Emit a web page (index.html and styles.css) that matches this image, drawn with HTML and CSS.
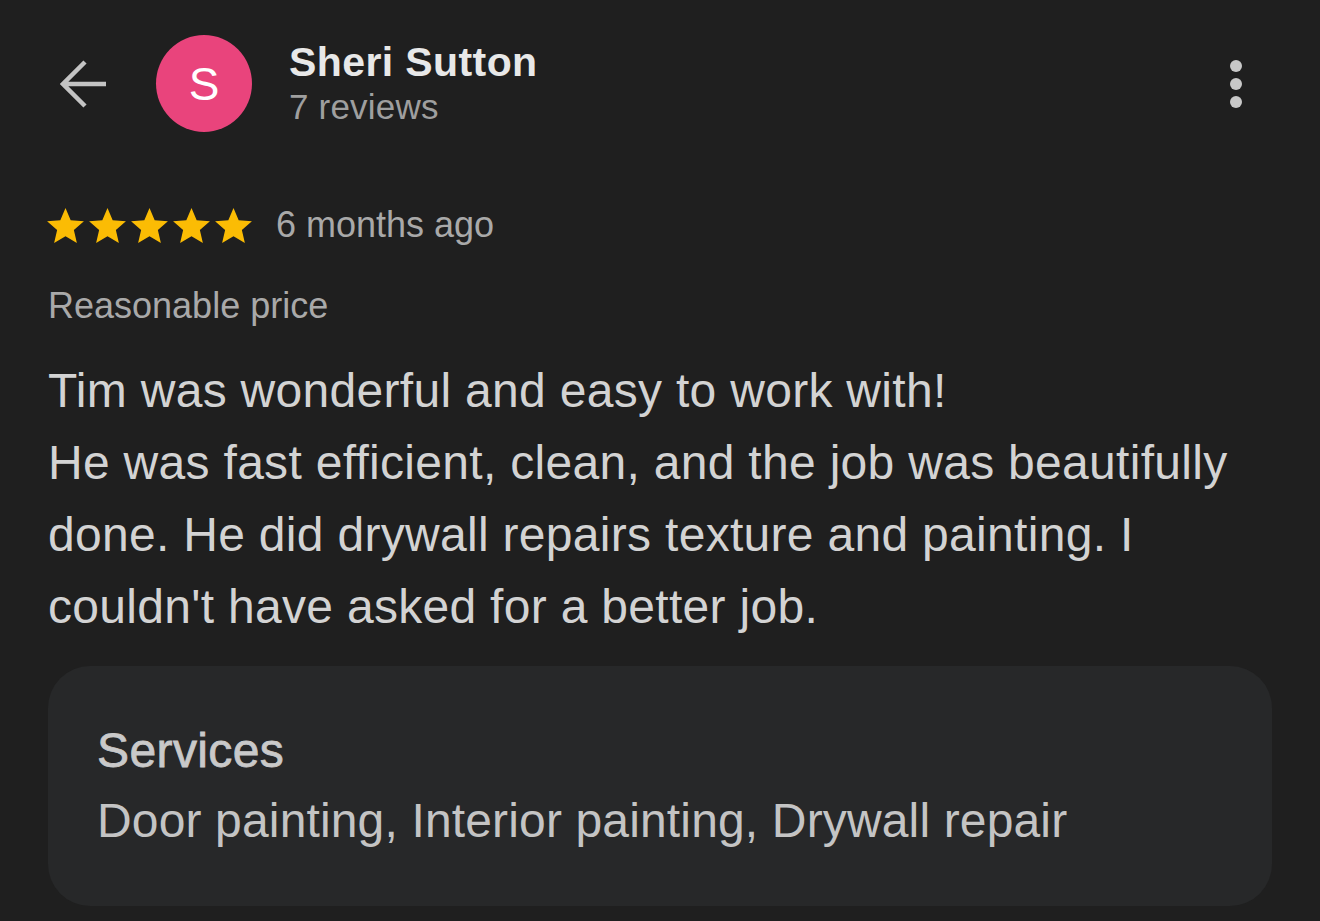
FILE: index.html
```html
<!DOCTYPE html>
<html lang="en">
<head>
<meta charset="utf-8">
<title>Review - Sheri Sutton</title>
<link rel="stylesheet" href="styles.css">
</head>
<body>
<div class="page">
  <header class="header">
    <button class="back" aria-label="Back">
      <svg width="48" height="48" viewBox="0 0 48 48"><path d="M46 24H3M25 2L3 24l22 22" fill="none" stroke="#c4c4c4" stroke-width="4.5" stroke-linecap="butt" stroke-linejoin="miter"/></svg>
    </button>
    <div class="avatar">S</div>
    <div class="who">
      <div class="name">Sheri Sutton</div>
      <div class="count">7 reviews</div>
    </div>
    <button class="more" aria-label="More">
      <svg width="12" height="48" viewBox="0 0 12 48"><circle cx="6" cy="6" r="6" fill="#c8c8c8"/><circle cx="6" cy="24" r="6" fill="#c8c8c8"/><circle cx="6" cy="42" r="6" fill="#c8c8c8"/></svg>
    </button>
  </header>

  <section class="review">
    <div class="rating">
      <div class="stars">
        <svg class="star" viewBox="2 2 20 19"><path d="M12 17.27L18.18 21l-1.64-7.03L22 9.24l-7.19-.61L12 2 9.19 8.63 2 9.24l5.46 4.73L5.82 21z"/></svg>
        <svg class="star" viewBox="2 2 20 19"><path d="M12 17.27L18.18 21l-1.64-7.03L22 9.24l-7.19-.61L12 2 9.19 8.63 2 9.24l5.46 4.73L5.82 21z"/></svg>
        <svg class="star" viewBox="2 2 20 19"><path d="M12 17.27L18.18 21l-1.64-7.03L22 9.24l-7.19-.61L12 2 9.19 8.63 2 9.24l5.46 4.73L5.82 21z"/></svg>
        <svg class="star" viewBox="2 2 20 19"><path d="M12 17.27L18.18 21l-1.64-7.03L22 9.24l-7.19-.61L12 2 9.19 8.63 2 9.24l5.46 4.73L5.82 21z"/></svg>
        <svg class="star" viewBox="2 2 20 19"><path d="M12 17.27L18.18 21l-1.64-7.03L22 9.24l-7.19-.61L12 2 9.19 8.63 2 9.24l5.46 4.73L5.82 21z"/></svg>
      </div>
      <span class="when">6 months ago</span>
    </div>
    <div class="tag">Reasonable price</div>
    <p class="text">Tim was wonderful and easy to work with!<br>He was fast efficient, clean, and the job was beautifully done. He did drywall repairs texture and painting. I couldn't have asked for a better job.</p>

    <div class="card">
      <div class="card-title">Services</div>
      <div class="card-body">Door painting, Interior painting, Drywall repair</div>
    </div>
  </section>
</div>
</body>
</html>
```

FILE: styles.css
```css
html, body {
  margin: 0;
  padding: 0;
  background: #1f1f1f;
}

body {
  font-family: "Liberation Sans", Arial, Helvetica, sans-serif;
  color: #d4d4d4;
  width: 1320px;
  height: 921px;
  overflow: hidden;
}

.page {
  display: flex;
  flex-direction: column;
}

.header {
  display: flex;
  align-items: center;
  height: 97px;
  padding: 35px 78px 0 60px;
}

.back, .more {
  background: none;
  border: 0;
  padding: 0;
  margin: 0;
  display: flex;
}

.avatar {
  width: 96px;
  height: 97px;
  border-radius: 50%;
  background: #e9447c;
  color: #ffffff;
  margin-left: 48px;
  display: flex;
  align-items: center;
  justify-content: center;
  font-size: 46px;
  line-height: 1;
  padding-top: 1px;
  box-sizing: border-box;
}

.who {
  margin-left: 37px;
  display: flex;
  flex-direction: column;
}

.name {
  font-size: 41px;
  font-weight: bold;
  line-height: 47px;
  letter-spacing: 0.4px;
  color: #e8e8e8;
}

.count {
  font-size: 35px;
  line-height: 42px;
  letter-spacing: 0.2px;
  color: #9f9f9f;
}

.more {
  margin-left: auto;
}

.review {
  padding: 72px 48px 0 48px;
  display: flex;
  flex-direction: column;
}

.rating {
  display: flex;
  align-items: center;
  height: 42px;
}

.stars {
  display: flex;
  gap: 5px;
  margin-left: -1px;
}

.star {
  width: 37px;
  height: 35px;
  fill: #fbbc04;
}

.when {
  margin-left: 24px;
  font-size: 36px;
  line-height: 42px;
  color: #a9a9a9;
}

.tag {
  margin-top: 39px;
  font-size: 36px;
  line-height: 42px;
  color: #a9a9a9;
}

.text {
  margin: 28px 0 0 0;
  font-size: 48px;
  line-height: 72px;
  letter-spacing: 0.3px;
  color: #d3d3d3;
}

.card {
  margin-top: 23px;
  width: 1224px;
  box-sizing: border-box;
  background: #272829;
  border-radius: 42px;
  padding: 50px 49px;
}

.card-title {
  font-size: 48px;
  line-height: 70px;
  letter-spacing: 0.4px;
  color: #c9c9c9;
  -webkit-text-stroke: 0.8px #c9c9c9;
}

.card-body {
  font-size: 48px;
  line-height: 70px;
  letter-spacing: 0.15px;
  color: #c4c4c4;
}
```
